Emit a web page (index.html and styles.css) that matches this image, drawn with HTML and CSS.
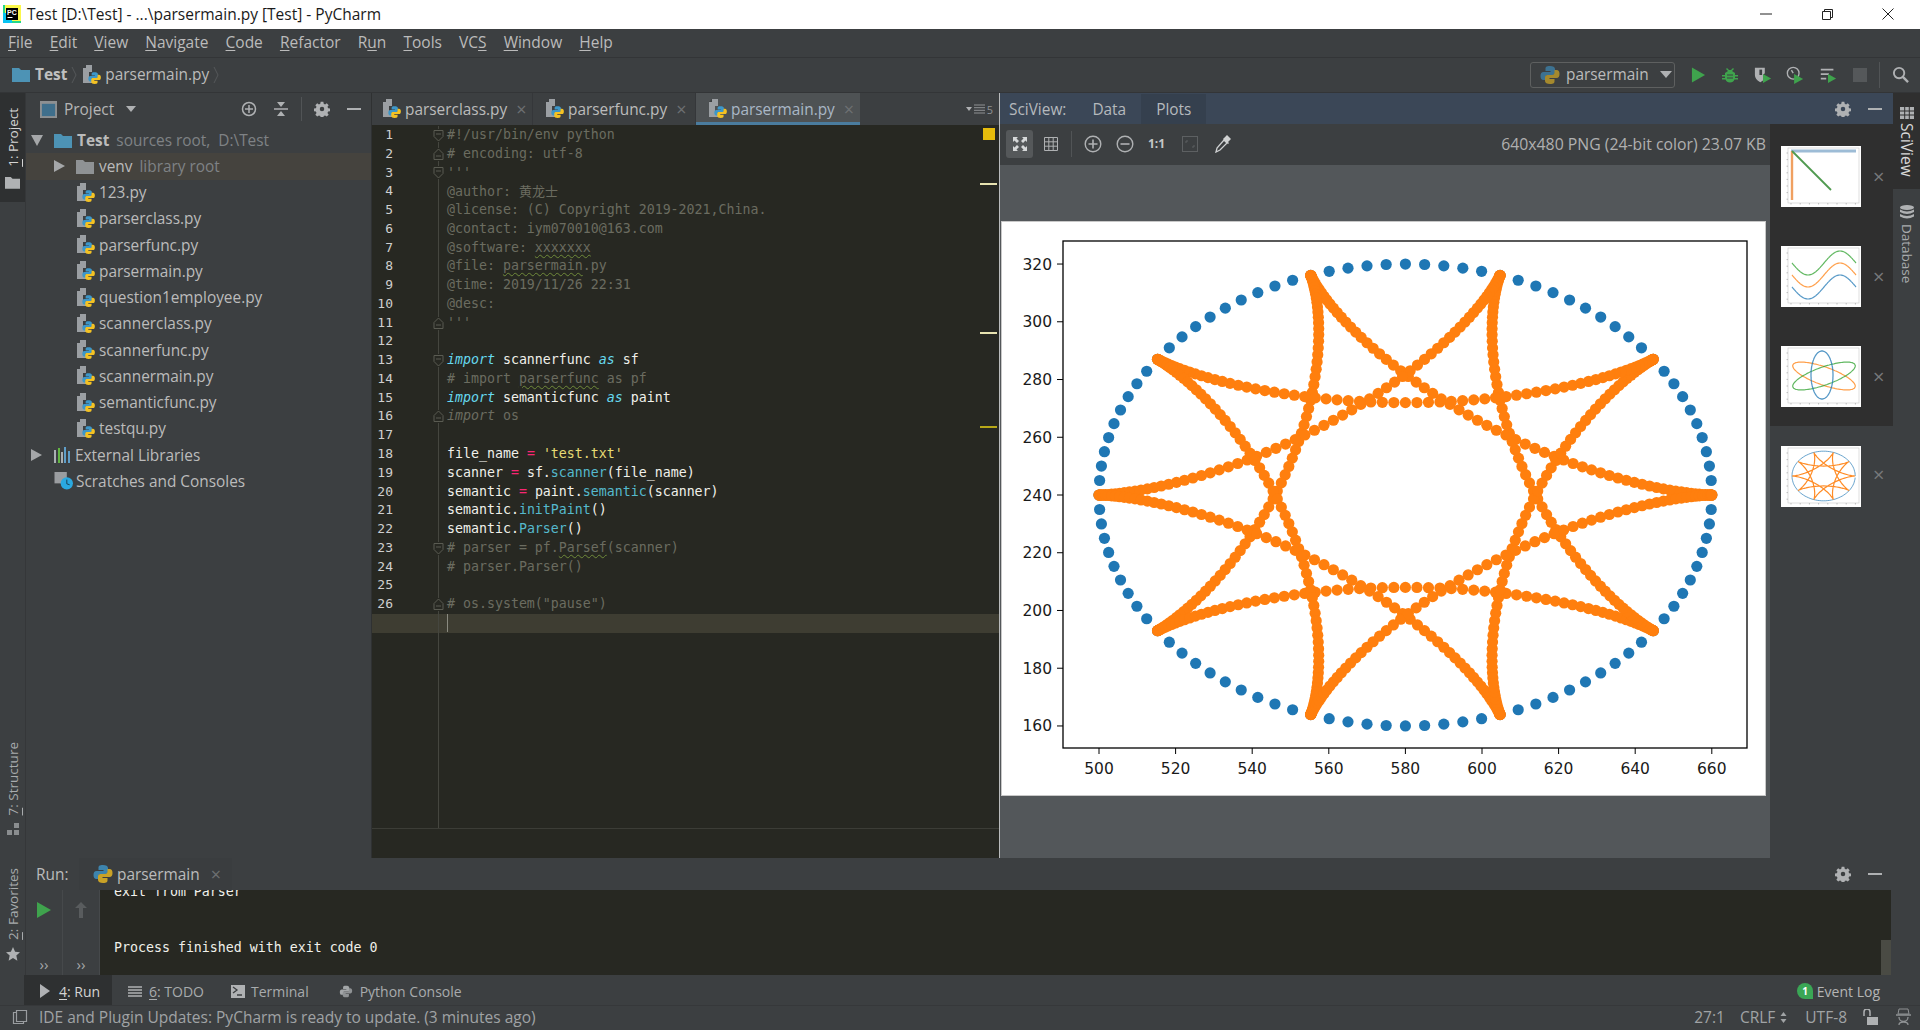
FILE: index.html
```html
<!DOCTYPE html>
<html lang="en">
<head>
<meta charset="utf-8">
<title>Test [D:\Test] - ...\parsermain.py [Test] - PyCharm</title>
<link rel="stylesheet" href="styles.css">
</head>
<body>
<svg class="sprite" aria-hidden="true">
  <symbol id="py" viewBox="0 0 18 20">
    <path d="M3 0h6v7h-3v7h3v4h-9v-15h3z" fill="#9b9fa3"/>
    <path d="M3 0v3h-3z" fill="#3c3f41"/>
    <g transform="translate(5 6.500) scale(.66)">
      <path d="M10 1c-4 0-4.500 1-4.500 3v2h5v1h-7c-2 0-3 1.500-3 4s1 4 3 4h2v-2.500c0-1.500 1-2.500 2.500-2.500h4.500c1.500 0 2.500-1 2.500-2.500v-3.500c0-2-2-3-5-3z" fill="#3d97c9"/>
      <path d="M10 19c4 0 4.500-1 4.500-3v-2h-5v-1h7c2 0 3-1.500 3-4s-1-4-3-4h-2v2.500c0 1.500-1 2.500-2.500 2.500h-4.500c-1.500 0-2.500 1-2.500 2.500v3.500c0 2 2 3 5 3z" fill="#f4c223"/>
    </g>
  </symbol>
  <symbol id="pylogo" viewBox="0 0 20 20">
    <path d="M10 1c-4 0-4.500 1-4.500 3v2h5v1h-7c-2 0-3 1.500-3 4s1 4 3 4h2v-2.500c0-1.500 1-2.500 2.500-2.500h4.500c1.500 0 2.500-1 2.500-2.500v-3.500c0-2-2-3-5-3z" fill="#3d84ad"/>
    <path d="M10 19c4 0 4.500-1 4.500-3v-2h-5v-1h7c2 0 3-1.500 3-4s-1-4-3-4h-2v2.500c0 1.500-1 2.500-2.500 2.500h-4.500c-1.500 0-2.500 1-2.500 2.500v3.500c0 2 2 3 5 3z" fill="#c9a227"/>
  </symbol>
  <symbol id="pymono" viewBox="0 0 20 20">
    <path d="M10 1c-4 0-4.500 1-4.500 3v2h5v1h-7c-2 0-3 1.500-3 4s1 4 3 4h2v-2.500c0-1.500 1-2.500 2.500-2.500h4.500c1.500 0 2.500-1 2.500-2.500v-3.500c0-2-2-3-5-3z" fill="#a3a6a8"/>
    <path d="M10 19c4 0 4.500-1 4.500-3v-2h-5v-1h7c2 0 3-1.500 3-4s-1-4-3-4h-2v2.500c0 1.500-1 2.500-2.500 2.500h-4.500c-1.500 0-2.500 1-2.500 2.500v3.500c0 2 2 3 5 3z" fill="#8f9294"/>
  </symbol>
  <symbol id="gear" viewBox="0 0 16 16">
    <path d="M6.500 0h3l.400 2.200 1.500.700 1.900-1.300 2.100 2.100-1.300 1.900.700 1.500 2.200.400v3l-2.200.400-.700 1.500 1.300 1.900-2.100 2.100-1.900-1.300-1.500.700-.400 2.200h-3l-.400-2.200-1.500-.700-1.900 1.300-2.100-2.100 1.300-1.900-.700-1.500-2.200-.400v-3l2.200-.400.700-1.500-1.300-1.900 2.100-2.100 1.900 1.300 1.500-.700z M8 5.500a2.500 2.500 0 1 0 0 5 2.500 2.500 0 0 0 0-5z" fill="#afb1b3" fill-rule="evenodd" transform="translate(.8 .8) scale(.9)"/>
  </symbol>
  <symbol id="folder" viewBox="0 0 18 15">
    <path d="M0 1h7l2 2h9v12h-18z" fill="currentColor"/>
  </symbol>
  <symbol id="chevron" viewBox="0 0 6 18">
    <path d="M1 1l4 8-4 8" fill="none" stroke="#55585a"/>
  </symbol>
</svg>

<header class="titlebar">
  <svg class="pc-logo" viewBox="0 0 18 18"><rect width="18" height="18" fill="#21d789"/><rect x="2" width="16" height="16" fill="#fcf84a"/><rect x="0" y="8" width="9" height="10" fill="#07c3f2"/><rect x="3" y="3" width="12" height="12" fill="#000"/><text x="4" y="9.500" class="pc-text">PC</text><rect x="4.500" y="12" width="5" height="1" fill="#fff"/></svg>
  <span class="title-text">Test [D:\Test] - ...\parsermain.py [Test] - PyCharm</span>
  <div class="win-controls">
    <svg class="win-btn" viewBox="0 0 14 14"><path d="M1 7h12" stroke="#222" fill="none"/></svg>
    <svg class="win-btn" viewBox="0 0 14 14"><path d="M2.500 4.500h8v8h-8zM4.500 4.500v-2h8v8h-2" stroke="#222" fill="none"/></svg>
    <svg class="win-btn" viewBox="0 0 14 14"><path d="M1.500 1.500l11 11M12.500 1.500l-11 11" stroke="#222" fill="none"/></svg>
  </div>
</header>

<nav class="menubar">
  <span class="menu-item"><u>F</u>ile</span>
  <span class="menu-item"><u>E</u>dit</span>
  <span class="menu-item"><u>V</u>iew</span>
  <span class="menu-item"><u>N</u>avigate</span>
  <span class="menu-item"><u>C</u>ode</span>
  <span class="menu-item"><u>R</u>efactor</span>
  <span class="menu-item">R<u>u</u>n</span>
  <span class="menu-item"><u>T</u>ools</span>
  <span class="menu-item">VC<u>S</u></span>
  <span class="menu-item"><u>W</u>indow</span>
  <span class="menu-item"><u>H</u>elp</span>
</nav>

<div class="navbar">
  <svg class="nav-folder"><use href="#folder"/></svg>
  <b class="crumb-root">Test</b>
  <svg class="crumb-sep"><use href="#chevron"/></svg>
  <svg class="pyicon nav-py"><use href="#py"/></svg>
  <span class="crumb">parsermain.py</span>
  <svg class="crumb-sep"><use href="#chevron"/></svg>
  <div class="nav-right">
    <div class="run-combo">
      <svg class="combo-py"><use href="#pylogo"/></svg>
      <span>parsermain</span>
      <i class="tri-down"></i>
    </div>
    <svg class="tool-ic ic-play" viewBox="0 0 16 18"><path d="M1 1l14 8-14 8z" fill="#3fa34d"/></svg>
    <svg class="tool-ic ic-bug" viewBox="0 0 18 18"><path d="M6 2l2 2h2l2-2 1 1-2 2 3 2v2h3v1.500h-3v1.500h3v1.500h-3.500q-1 3-4.500 3t-4.500-3h-3.500v-1.500h3v-1.500h-3v-1.500h3v-2l3-2-2-2z" fill="#3fa34d"/><path d="M6 9h6M6 12h6" stroke="#3c3f41"/></svg>
    <svg class="tool-ic ic-cov" viewBox="0 0 20 20"><path d="M1 2h11v6l-2 2v6l-3 2q-6-3-6-8z" fill="#afb1b3"/><path d="M6 4h3v6h-3z" fill="#3c3f41"/><path d="M10 9l9 5-9 5z" fill="#3fa34d"/></svg>
    <svg class="tool-ic ic-prof" viewBox="0 0 20 20"><circle cx="8" cy="8" r="6.500" fill="none" stroke="#afb1b3" stroke-width="1.500"/><path d="M8 8l-2-3.500" stroke="#afb1b3" stroke-width="1.500"/><path d="M9 9l10 5.500-10 5.500z" fill="#3fa34d"/></svg>
    <svg class="tool-ic ic-conc" viewBox="0 0 20 20"><path d="M2 3h14v2h-14zM2 8h9v2h-9zM2 13h6v2h-6z" fill="#afb1b3"/><path d="M10 9l9 5-9 5z" fill="#3fa34d"/></svg>
    <svg class="tool-ic ic-stop" viewBox="0 0 14 14"><rect width="14" height="14" fill="#55585a"/></svg>
    <i class="v-sep nav-sep"></i>
    <svg class="tool-ic ic-search" viewBox="0 0 18 18"><circle cx="7.500" cy="7.500" r="5.500" fill="none" stroke="#afb1b3" stroke-width="2"/><path d="M11.500 11.500l5.500 5.500" stroke="#afb1b3" stroke-width="2.500"/></svg>
  </div>
</div>

<div class="workspace">
  <aside class="stripe stripe-left">
    <div class="stripe-tab-active">
      <span class="vtext"><u>1</u>: Project</span>
      <svg class="stripe-folder"><use href="#folder"/></svg>
    </div>
    <div class="stripe-spacer"></div>
    <div class="stripe-tab tab-structure">
      <span class="vtext"><u>7</u>: Structure</span>
      <svg class="stripe-ic" viewBox="0 0 12 12"><path d="M0 7h5v5h-5zM7 7h5v5h-5zM7 0h5v5h-5z" fill="#8a8d8f"/></svg>
    </div>
    <div class="stripe-tab tab-fav">
      <span class="vtext"><u>2</u>: Favorites</span>
      <svg class="stripe-star" viewBox="0 0 16 16"><path d="M8 0l2.400 5.400 5.600.600-4.200 3.800 1.200 5.800-5-3-5 3 1.200-5.800-4.200-3.800 5.600-.600z" fill="#afb1b3"/></svg>
    </div>
  </aside>

  <div class="center">
    <div class="upper">
      <section class="project">
        <div class="panel-head">
          <svg class="proj-ic" viewBox="0 0 18 18"><rect width="18" height="18" fill="#8d9092"/><rect x="2" y="3" width="14" height="13" fill="#3f6f8c"/></svg>
          <span class="proj-label">Project</span>
          <i class="tri-down small"></i>
          <div class="head-right">
            <svg class="hd-ic" viewBox="0 0 16 16"><circle cx="8" cy="8" r="6.500" fill="none" stroke="#afb1b3" stroke-width="1.500"/><path d="M8 4v8M4 8h8" stroke="#afb1b3" stroke-width="1.500"/></svg>
            <svg class="hd-ic" viewBox="0 0 16 16"><path d="M1 8h14" stroke="#afb1b3" stroke-width="1.500"/><path d="M8 6l-4-5h8zM8 10l-4 5h8z" fill="#afb1b3"/></svg>
            <i class="v-sep"></i>
            <svg class="hd-ic"><use href="#gear"/></svg>
            <svg class="hd-ic" viewBox="0 0 16 16"><path d="M1 8h14" stroke="#afb1b3" stroke-width="2"/></svg>
          </div>
        </div>
        <div class="tree">
          <div class="row d0"><i class="tri open"></i><svg class="row-folder blue"><use href="#folder"/></svg><b class="root-name">Test</b><span class="dim">sources root,&nbsp; D:\Test</span></div>
          <div class="row d1 selected"><i class="tri closed"></i><svg class="row-folder grey"><use href="#folder"/></svg><span>venv</span><span class="dim">library root</span></div>
          <div class="row d2"><svg class="pyicon"><use href="#py"/></svg><span>123.py</span></div>
          <div class="row d2"><svg class="pyicon"><use href="#py"/></svg><span>parserclass.py</span></div>
          <div class="row d2"><svg class="pyicon"><use href="#py"/></svg><span>parserfunc.py</span></div>
          <div class="row d2"><svg class="pyicon"><use href="#py"/></svg><span>parsermain.py</span></div>
          <div class="row d2"><svg class="pyicon"><use href="#py"/></svg><span>question1employee.py</span></div>
          <div class="row d2"><svg class="pyicon"><use href="#py"/></svg><span>scannerclass.py</span></div>
          <div class="row d2"><svg class="pyicon"><use href="#py"/></svg><span>scannerfunc.py</span></div>
          <div class="row d2"><svg class="pyicon"><use href="#py"/></svg><span>scannermain.py</span></div>
          <div class="row d2"><svg class="pyicon"><use href="#py"/></svg><span>semanticfunc.py</span></div>
          <div class="row d2"><svg class="pyicon"><use href="#py"/></svg><span>testqu.py</span></div>
          <div class="row d0"><i class="tri closed"></i><svg class="lib-ic" viewBox="0 0 19 18"><path d="M1 4h2v13h-2zM8 6h2v11h-2z" fill="#aab0b4"/><path d="M5 2h2v15h-2z" fill="#62b543"/><path d="M11 1h2v16h-2zM15 5h2v12h-2z" fill="#5f9ec9"/></svg><span>External Libraries</span></div>
          <div class="row noarrow"><svg class="lib-ic" viewBox="0 0 19 19"><path d="M0 0h13v12h-13z" fill="#9a9da0"/><circle cx="13" cy="12" r="6.500" fill="#2aa9e0"/><path d="M13 8v4.500l3 1" stroke="#1b3b4d" fill="none"/></svg><span>Scratches and Consoles</span></div>
        </div>
      </section>

      <section class="editor">
        <div class="tabs">
          <div class="tab tab-first"><svg class="pyicon"><use href="#py"/></svg><span>parserclass.py</span><em class="tab-x">×</em></div>
          <div class="tab tab-second"><svg class="pyicon"><use href="#py"/></svg><span>parserfunc.py</span><em class="tab-x">×</em></div>
          <div class="tab tab-active"><svg class="pyicon"><use href="#py"/></svg><span>parsermain.py</span><em class="tab-x">×</em></div>
          <div class="tab-more"><i class="tri-down tiny"></i><svg class="more-ic" viewBox="0 0 11 10"><path d="M0 1h11M0 3.700h11M0 6.300h11M0 9h11" stroke="#8f9294"/></svg><span>5</span></div>
        </div>
        <div class="code-wrap">
          <div class="gutter" id="gutter"></div>
          <div class="fold-col" id="folds"></div>
          <pre class="code"><div class="ln c">#!/usr/bin/env python</div><div class="ln c"># encoding: utf-8</div><div class="ln c">'''</div><div class="ln c">@author: <span class="cjk">黄龙士</span></div><div class="ln c">@license: (C) Copyright 2019-2021,China.</div><div class="ln c">@contact: iym070010@163.com</div><div class="ln c">@software: <span class="sq">xxxxxxx</span></div><div class="ln c">@file: <span class="sq">parsermain</span>.py</div><div class="ln c">@time: 2019/11/26 22:31</div><div class="ln c">@desc:</div><div class="ln c">'''</div><div class="ln"></div><div class="ln"><span class="kw">import</span> scannerfunc <span class="kw">as</span> sf</div><div class="ln c"># import <span class="sq">parserfunc</span> as pf</div><div class="ln"><span class="kw">import</span> semanticfunc <span class="kw">as</span> paint</div><div class="ln c"><span class="it">import</span> os</div><div class="ln"></div><div class="ln">file_name <span class="op">=</span> <span class="str">'test.txt'</span></div><div class="ln">scanner <span class="op">=</span> sf.<span class="fn">scanner</span>(file_name)</div><div class="ln">semantic <span class="op">=</span> paint.<span class="fn">semantic</span>(scanner)</div><div class="ln">semantic.<span class="fn">initPaint</span>()</div><div class="ln">semantic.<span class="fn">Parser</span>()</div><div class="ln c"># parser = pf.<span class="sq">Parsef</span>(scanner)</div><div class="ln c"># parser.Parser()</div><div class="ln"></div><div class="ln c"># os.system("pause")</div><div class="ln current"><b class="caret"></b></div></pre>
          <div class="stripe-marks">
            <i class="mark-box"></i>
            <i class="mark m1"></i>
            <i class="mark m2"></i>
            <i class="mark m3"></i>
          </div>
          <div class="h-rule"></div>
        </div>
      </section>

      <section class="sciview">
        <div class="sci-head">
          <span class="sci-title">SciView:</span>
          <span class="sci-tab">Data</span>
          <span class="sci-tab active">Plots</span>
          <div class="head-right">
            <svg class="hd-ic"><use href="#gear"/></svg>
            <svg class="hd-ic" viewBox="0 0 16 16"><path d="M1 8h14" stroke="#afb1b3" stroke-width="2"/></svg>
          </div>
        </div>
        <div class="sci-body">
          <div class="sci-main">
            <div class="sci-tools">
              <span class="fit-btn"><svg viewBox="0 0 16 16"><path d="M1 1h5l-1.500 1.500 2.500 2.500-2 2-2.500-2.500-1.500 1.500zM15 1v5l-1.500-1.500-2.500 2.500-2-2 2.500-2.500-1.500-1.500zM1 15v-5l1.500 1.500 2.500-2.500 2 2-2.500 2.500 1.500 1.500zM15 15h-5l1.500-1.500-2.500-2.500 2-2 2.500 2.500 1.500-1.500z" fill="#d6d8d9"/></svg></span>
              <svg class="sci-ic grid-ic" viewBox="0 0 16 16"><path d="M1.500 1.500h13v13h-13zM1.500 5.800h13M1.500 10.200h13M5.800 1.500v13M10.200 1.500v13" stroke="#afb1b3" fill="none"/></svg>
              <i class="v-sep tool-sep"></i>
              <svg class="sci-ic zoom-ic" viewBox="0 0 18 18"><circle cx="9" cy="9" r="7.800" fill="none" stroke="#afb1b3" stroke-width="1.400"/><path d="M4.500 9h9M9 4.500v9" stroke="#afb1b3" stroke-width="1.600"/></svg>
              <svg class="sci-ic zoom-ic" viewBox="0 0 18 18"><circle cx="9" cy="9" r="7.800" fill="none" stroke="#afb1b3" stroke-width="1.400"/><path d="M4.500 9h9" stroke="#afb1b3" stroke-width="1.600"/></svg>
              <span class="one-one">1:1</span>
              <svg class="sci-ic box-ic" viewBox="0 0 16 16"><rect x=".5" y=".5" width="15" height="15" fill="none" stroke="#5d6062"/><path d="M4 5h2M4 5v2M12 11h-2M12 11v-2" stroke="#5d6062"/></svg>
              <svg class="sci-ic drop-ic" viewBox="0 0 16 18"><path d="M1 17l1-4 7-8 3 3-7 7z" fill="none" stroke="#cfd1d2" stroke-width="1.300"/><path d="M9 3l3-3 4 4-3 3 1 1-1 1-5-5 1-1z" fill="#cfd1d2"/></svg>
              <span class="img-info">640x480 PNG (24-bit color) 23.07 KB</span>
            </div>
            <div class="canvas">
              <svg class="plot" id="plot" viewBox="0 0 763 573">
                <rect x="61" y="19" width="684" height="507" fill="#fff" stroke="#000" stroke-width="1.300"/>
                <g id="plot-dots"></g>
                <g id="plot-axes" class="axis"></g>
              </svg>
            </div>
          </div>
          <div class="thumbs">
            <div class="thumb"><svg class="thumb-img" id="t1" viewBox="0 0 80 61"></svg><em>×</em></div>
            <div class="thumb"><svg class="thumb-img" id="t2" viewBox="0 0 80 61"></svg><em>×</em></div>
            <div class="thumb"><svg class="thumb-img" id="t3" viewBox="0 0 80 61"></svg><em>×</em></div>
            <div class="thumb selected"><svg class="thumb-img" id="t4" viewBox="0 0 80 61"></svg><em>×</em></div>
          </div>
        </div>
      </section>
    </div>

    <section class="run">
      <div class="run-head">
        <span class="run-label">Run:</span>
        <div class="run-tab"><svg class="run-py"><use href="#pylogo"/></svg><span>parsermain</span><em class="tab-x">×</em></div>
        <div class="head-right">
          <svg class="hd-ic"><use href="#gear"/></svg>
          <svg class="hd-ic" viewBox="0 0 16 16"><path d="M1 8h14" stroke="#afb1b3" stroke-width="2"/></svg>
        </div>
      </div>
      <div class="run-body">
        <div class="run-col">
          <svg class="run-play" viewBox="0 0 14 16"><path d="M0 0l14 8-14 8z" fill="#3fa34d"/></svg>
          <span class="chev">››</span>
        </div>
        <div class="run-col">
          <svg class="run-up" viewBox="0 0 14 16"><path d="M7 0l6 6h-4v10h-4v-10h-4z" fill="#595c5e"/></svg>
          <span class="chev">››</span>
        </div>
        <div class="console">
          <div class="con-line clip">exit from Parser</div>
          <div class="con-line"></div>
          <div class="con-line"></div>
          <div class="con-line">Process finished with exit code 0</div>
        </div>
        <i class="console-thumb"></i>
      </div>
    </section>
  </div>

  <aside class="stripe stripe-right">
    <div class="stripe-tab-active right">
      <svg class="sci-stripe" viewBox="0 0 14 12"><path d="M0 0h14v12h-14z" fill="#afb1b3"/><path d="M0 4h14M0 8h14M4.700 0v12M9.300 0v12" stroke="#2f2f2f"/></svg>
      <span class="vtext-r light">SciView</span>
    </div>
    <div class="stripe-tab right-db">
      <svg class="sci-stripe db" viewBox="0 0 14 14"><ellipse cx="7" cy="2.500" rx="7" ry="2.500" fill="#afb1b3"/><path d="M0 4.500q7 4 14 0v2.500q-7 4-14 0zM0 9q7 4 14 0v2.500q-7 4-14 0z" fill="#afb1b3"/></svg>
      <span class="vtext-r">Database</span>
    </div>
  </aside>
</div>

<div class="bottom-tools">
  <div class="bt-item active"><svg class="bt-play" viewBox="0 0 10 14"><path d="M0 0l10 7-10 7z" fill="#afb1b3"/></svg><span><u>4</u>: Run</span></div>
  <div class="bt-item"><svg class="bt-ic" viewBox="0 0 14 12"><path d="M0 1.500h14M0 4.500h14M0 7.500h14M0 10.500h14" stroke="#afb1b3" stroke-width="1.500"/></svg><span><u>6</u>: TODO</span></div>
  <div class="bt-item"><svg class="bt-ic" viewBox="0 0 14 13"><rect width="14" height="13" fill="#afb1b3"/><path d="M2 2l4 3-4 3M6 10h5" stroke="#3c3f41" stroke-width="1.300" fill="none"/></svg><span>Terminal</span></div>
  <div class="bt-item"><svg class="bt-ic"><use href="#pymono"/></svg><span>Python Console</span></div>
  <div class="bt-right"><svg class="event-ic" viewBox="0 0 16 16"><path d="M8 0a8 8 0 0 1 8 8v8h-8a8 8 0 0 1 0-16z" fill="#3aa655"/><text x="8" y="11.500" class="event-num">1</text></svg><span>Event Log</span></div>
</div>

<footer class="status">
  <svg class="st-ic" viewBox="0 0 16 16"><path d="M4.500 1.500h10v11h-10zM4.500 3.500h-3v11h10v-2" fill="none" stroke="#9a9da0" stroke-width="1.200"/></svg>
  <span class="st-msg">IDE and Plugin Updates: PyCharm is ready to update. (3 minutes ago)</span>
  <div class="st-right">
    <span>27:1</span>
    <span class="st-crlf">CRLF</span>
    <svg class="updown" viewBox="0 0 7 11"><path d="M3.500 0l3 4h-6zM3.500 11l3-4h-6z" fill="#a0a3a5"/></svg>
    <span class="st-utf">UTF-8</span>
    <svg class="st-lock" viewBox="0 0 15 16"><path d="M1 7v-4a3 3 0 0 1 6 0v4" fill="none" stroke="#afb1b3" stroke-width="1.500"/><rect x="4" y="8" width="11" height="8" fill="#afb1b3"/></svg>
    <svg class="st-hector" viewBox="0 0 15 18"><path d="M3 1h9l1 5h-11z" fill="none" stroke="#8f9294"/><path d="M0 7h15M3 9a4.500 4.500 0 0 0 9 0M3 17q0-3 4.500-3t4.500 3" fill="none" stroke="#8f9294" stroke-width="1.300"/></svg>
  </div>
</footer>
<script src="script.js"></script>
</body>
</html>
```
FILE: styles.css
```css
* { box-sizing: border-box; }
html, body { margin: 0; padding: 0; }
body {
  width: 1920px; height: 1030px; overflow: hidden;
  display: flex; flex-direction: column;
  background: #3c3f41; color: #bbbbbb;
  font: 15.400px "Open Sans", "Noto Sans", sans-serif;
}
svg { display: block; flex: none; }
.sprite { width: 0; height: 0; position: absolute; }
i, em { font-style: normal; }
u { text-underline-offset: 2px; }
.head-right { margin-left: auto; display: flex; align-items: center; }
.v-sep { display: block; width: 1px; background: #515456; flex: none; }

/* title */
.titlebar { height: 29px; background: #fff; color: #1a1a1a; display: flex; align-items: center; flex: none; padding-bottom: 2px; }
.pc-logo { width: 18px; height: 18px; margin-left: 3px; }
.pc-text { font: bold 7px "Liberation Sans", sans-serif; fill: #fff; }
.title-text { margin-left: 6px; font-size: 15.500px; white-space: pre; }
.win-controls { margin-left: auto; display: flex; gap: 47px; padding-right: 25px; }
.win-btn { width: 14px; height: 14px; }

/* menu */
.menubar { height: 29px; flex: none; display: flex; align-items: center; padding: 0 0 2px 8px; gap: 17.100px; border-bottom: 1px solid #333537; font-size: 15.500px; }
.menu-item { color: #bbb; white-space: nowrap; }

/* navbar */
.navbar { height: 35px; flex: none; display: flex; align-items: center; padding: 0 0 1px 12px; border-bottom: 1px solid #333537; }
.nav-folder { width: 18px; height: 15px; color: #4d93b5; }
.crumb-root { margin-left: 5px; color: #c0c0c0; font-weight: 700; }
.crumb-sep { width: 6px; height: 18px; margin: 0 6px 0 4px; }
.crumb { margin-left: 4px; color: #bbb; }
.nav-right { margin-left: auto; display: flex; align-items: center; }
.run-combo { width: 145px; height: 26px; margin-right: 16px; border: 1px solid #5e6060; border-radius: 3px; display: flex; align-items: center; padding-left: 9px; gap: 6px; }
.combo-py { width: 20px; height: 20px; opacity: .75; }
.tri-down { display: block; width: 0; height: 0; border-left: 6px solid transparent; border-right: 6px solid transparent; border-top: 7px solid #afb1b3; margin-left: 5px; }
.tri-down.small { border-left-width: 5px; border-right-width: 5px; border-top-width: 6px; margin-left: 12px; }
.tri-down.tiny { border-left-width: 3px; border-right-width: 3px; border-top-width: 4px; margin: 0 2px 0 0; }
.tool-ic { width: 18px; height: 18px; margin-right: 14px; }
.ic-play { width: 15px; margin-right: 15px; }
.ic-bug { margin-right: 15px; }
.ic-prof { margin-right: 15px; }
.ic-stop { width: 14px; height: 14px; margin-right: 12px; margin-left: 2px; }
.nav-sep { height: 26px; margin-right: 12px; }
.ic-search { margin-right: 11px; width: 17px; height: 17px; }

/* workspace */
.workspace { flex: 1; min-height: 0; display: flex; }
.stripe { width: 26px; flex: none; display: flex; flex-direction: column; align-items: center; background: #3c3f41; font-size: 13.500px; color: #a8abad; }
.stripe-left { border-right: 1px solid #353739; }
.stripe-right { width: 27px; }
.vtext { writing-mode: vertical-rl; transform: rotate(180deg); white-space: nowrap; }
.vtext-r { writing-mode: vertical-rl; white-space: nowrap; }
.stripe-tab-active { width: 100%; height: 109px; flex: none; background: #2e3031; color: #d4d4d4; display: flex; flex-direction: column; align-items: center; padding-top: 15px; }
.stripe-tab-active.right { height: 96px; padding-top: 14px; background: #2f2f2f; gap: 4px; }
.light { color: #d8d8d8; font-size: 15.500px; }
.stripe-folder { width: 15px; height: 13px; color: #b0b2b4; margin-top: 9px; }
.stripe-spacer { flex: 1; min-height: 0; }
.stripe-tab { display: flex; flex-direction: column; align-items: center; flex: none; }
.tab-structure { gap: 8px; margin-bottom: 33px; }
.tab-fav { padding-bottom: 14px; gap: 7px; }
.stripe-ic { width: 12px; height: 12px; }
.stripe-star { width: 14px; height: 14px; }
.right-db { margin-top: 16px; gap: 5px; }
.sci-stripe { width: 14px; height: 12px; }
.sci-stripe.db { height: 14px; }

.center { flex: 1; min-width: 0; display: flex; flex-direction: column; }
.upper { height: 765px; flex: none; display: flex; }

/* project */
.project { width: 346px; flex: none; display: flex; flex-direction: column; background: #3c3f41; border-right: 1px solid #2f3132; }
.panel-head { height: 32px; flex: none; display: flex; align-items: center; padding-left: 14px; }
.proj-ic { width: 17px; height: 17px; }
.proj-label { margin-left: 7px; color: #b5b5b5; }
.hd-ic { width: 16px; height: 16px; }
.project .head-right { gap: 16px; padding-right: 9px; }
.project .v-sep { height: 24px; margin: 0 -4px; }
.tree { padding-top: 2px; }
.row { height: 26.260px; display: flex; align-items: center; white-space: nowrap; }
.row.d0 { padding-left: 5px; }
.row.d1 { padding-left: 28px; }
.row.d2 { padding-left: 51px; }
.row.noarrow { padding-left: 28px; }
.row.selected { background: #45433e; }
.tri { display: block; width: 0; height: 0; flex: none; }
.tri.open { border-left: 6px solid transparent; border-right: 6px solid transparent; border-top: 11px solid #a5a7a9; margin-right: 11px; }
.tri.closed { border-top: 6px solid transparent; border-bottom: 6px solid transparent; border-left: 11px solid #a5a7a9; margin-right: 11px; }
.row-folder { width: 18px; height: 15px; }
.row-folder.blue { color: #4d93b5; }
.row-folder.grey { color: #8f9294; }
.root-name { margin-left: 5px; color: #bbb; font-weight: 700; }
.row.d1 > span:first-of-type { margin-left: 5px; }
.dim { margin-left: 7px; color: #7f8285; }
.pyicon { width: 18px; height: 20px; }
.row.d2 span { margin-left: 4px; }
.lib-ic { width: 19px; height: 18px; margin-right: 3px; }

/* editor */
.editor { width: 628px; flex: none; display: flex; flex-direction: column; background: #272822; border-right: 1px solid #b9bbbc; }
.tabs { height: 32px; flex: none; display: flex; align-items: stretch; background: #3c3f41; }
.tab { display: flex; align-items: center; padding-left: 11px; color: #bbb; border-right: 1px solid #35373a; }
.tab span { margin-left: 4px; }
.tab-first { width: 161px; }
.tab-second { width: 163px; padding-left: 13px; }
.tab-active { width: 164px; padding: 3px 0 0 13px; background: #4e5254; border-bottom: 3px solid #4a7c9e; border-right: 0; color: #a9b7c6; }
.tab-x { margin-left: 9px; color: #6d7072; font-size: 18px; line-height: 1; }
.tab-more { margin-left: auto; display: flex; align-items: center; padding-right: 6px; color: #8f9294; font-size: 11px; }
.more-ic { width: 11px; height: 10px; margin-right: 2px; }
.code-wrap { flex: 1; position: relative; display: flex; min-height: 0; padding-top: 1px; }
.gutter { width: 61px; flex: none; font: 13px/18.770px "DejaVu Sans Mono", monospace; color: #cfcfcf; }
.gutter div { text-align: right; padding-right: 40px; height: 18.770px; }
.fold-col { width: 14px; flex: none; position: relative; }
.fold-col::before { content: ""; position: absolute; top: 0; bottom: 30px; left: 5px; width: 1px; background: #45463f; }
.fold-cell { height: 18.770px; position: relative; display: flex; align-items: center; }
.fold-cell svg { width: 11px; height: 13px; }
.code { margin: 0; flex: 1; font: 13.280px/18.770px "DejaVu Sans Mono", "Noto Sans CJK SC", monospace; color: #f0f0ea; min-width: 0; }
.ln { height: 18.770px; white-space: pre; }
.ln.current { background: #3e3d32; margin-left: -75px; padding-left: 75px; }
.caret { display: block; width: 1px; height: 18px; background: #8a8a80; }
.c { color: #6b6c60; }
.it { font-style: italic; }
.cjk { font-family: "Noto Sans CJK SC", sans-serif; font-size: 13px; }
.kw { color: #66d9ef; font-style: italic; }
.op { color: #f92672; }
.str { color: #e6db74; }
.fn { color: #55b9cd; }
.sq { text-decoration: underline wavy #6f8a3a 1px; text-underline-offset: 2px; }
.stripe-marks { position: absolute; top: 0; bottom: 0; right: 0; width: 20px; }
.mark-box { position: absolute; right: 4px; top: 3px; width: 12px; height: 12px; background: #e6bc0c; }
.mark { position: absolute; right: 2px; width: 17px; height: 2px; background: #e8e3b0; }
.m1 { top: 58px; }
.m2 { top: 207px; }
.m3 { top: 301px; background: #b8a818; }
.h-rule { position: absolute; left: 0; right: 0; top: 703px; height: 1px; background: #3c3d37; }

/* sciview */
.sciview { flex: 1; min-width: 0; display: flex; flex-direction: column; }
.sci-head { height: 31px; flex: none; background: #3b4757; display: flex; align-items: stretch; padding: 1px 0 0 9px; color: #b5b9bd; }
.sci-title, .sci-tab { display: flex; align-items: center; }
.sci-tab { padding: 0 15px; }
.sci-title + .sci-tab { margin-left: 11px; }
.sci-tab.active { background: #35404e; }
.sci-head .head-right { gap: 16px; padding-right: 10px; }
.sci-body { flex: 1; min-height: 0; display: flex; }
.sci-main { width: 770px; flex: none; display: flex; flex-direction: column; background: #53575a; }
.sci-tools { height: 41px; flex: none; background: #3c3f41; display: flex; align-items: center; padding: 0 0 2px 6px; }
.fit-btn { width: 27px; height: 28px; background: #55585a; border-radius: 3px; display: flex; align-items: center; justify-content: center; }
.fit-btn svg { width: 16px; height: 16px; }
.sci-ic { width: 16px; height: 16px; }
.grid-ic { margin-left: 10px; }
.tool-sep { height: 26px; margin: 0 12px 0 12px; }
.zoom-ic { width: 18px; height: 18px; margin-right: 14px; }
.one-one { font-size: 12px; font-weight: 700; color: #c5c7c8; width: 18px; margin-right: 16px; }
.box-ic { margin-right: 17px; }
.drop-ic { height: 18px; }
.img-info { margin-left: auto; padding-right: 4px; font-size: 15.800px; color: #b0b0b0; white-space: nowrap; }
.canvas { flex: 1; padding: 57px 0 0 2px; }
.plot { width: 763px; height: 573px; background: #fff; outline: 1px solid #c8c8c8; }
.axis { font: 15.500px "DejaVu Sans", sans-serif; fill: #1a1a1a; }
.thumbs { flex: 1; display: flex; flex-direction: column; background: #2f2f2f; padding-top: 2px; }
.thumb { height: 100px; flex: none; display: flex; align-items: center; padding-left: 11px; color: #77797b; }
.thumb em { font-size: 20px; margin-left: 12px; }
.thumb.selected { background: #3c3f41; flex: 1; align-items: flex-start; padding-top: 20px; }
.thumb.selected em { margin-top: 15px; }
.thumb-img { width: 80px; height: 61px; background: #fff; }

/* run */
.run { flex: 1; min-height: 0; display: flex; flex-direction: column; }
.run-head { height: 32px; flex: none; display: flex; align-items: stretch; padding-left: 10px; }
.run-label { display: flex; align-items: center; width: 43px; }
.run-tab { width: 153px; background: #3a3d3f; display: flex; align-items: center; padding-left: 14px; white-space: nowrap; }
.run-py { width: 20px; height: 20px; margin-right: 4px; }
.run-tab .tab-x { margin-left: 11px; }
.run-head .head-right { gap: 16px; padding-right: 10px; }
.run-body { flex: 1; min-height: 0; display: flex; position: relative; }
.run-col { width: 37px; flex: none; display: flex; flex-direction: column; align-items: center; padding: 12px 0 2px; border-right: 1px solid #46494b; }
.run-play { width: 14px; height: 16px; }
.run-up { width: 14px; height: 16px; }
.chev { margin-top: auto; font-size: 15px; line-height: 18px; color: #a5a8aa; }
.console { flex: 1; min-width: 0; margin-right: 2px; background: #272822; color: #f0f0ea; font: 13.280px/18.770px "DejaVu Sans Mono", monospace; padding: 0 0 0 14px; overflow: hidden; }
.con-line { height: 18.770px; white-space: pre; }
.clip { margin-top: -7px; }
.console-thumb { position: absolute; right: 2px; bottom: 0; width: 10px; height: 35px; background: #4a4b44; }

/* bottom */
.bottom-tools { height: 31px; flex: none; display: flex; align-items: center; padding-left: 24px; font-size: 14px; color: #a8abad; background: #3c3f41; border-bottom: 1px solid #36383a; white-space: nowrap; }
.bt-item { height: 30px; display: flex; align-items: center; gap: 7px; padding-top: 2px; }
.bt-item.active { background: #2e3031; color: #d4d4d4; width: 88px; padding-left: 16px; gap: 9px; }
.bt-play { width: 10px; height: 14px; }
.bt-ic { width: 14px; height: 13px; }
.bt-item:nth-child(2) { margin-left: 16px; }
.bt-item:nth-child(3) { margin-left: 27px; gap: 6px; }
.bt-item:nth-child(4) { margin-left: 30px; }
.bt-right { margin-left: auto; display: flex; align-items: center; gap: 4px; padding: 2px 40px 0 0; color: #b5b5b5; }
.event-ic { width: 16px; height: 16px; }
.event-num { font: bold 10px "Open Sans", sans-serif; fill: #fff; text-anchor: middle; }

/* status */
.status { height: 24px; flex: none; display: flex; align-items: center; padding: 0 0 2px 12px; color: #a0a3a5; font-size: 15.500px; white-space: nowrap; }
.st-ic { width: 16px; height: 16px; }
.st-msg { margin-left: 11px; }
.st-right { margin-left: auto; display: flex; align-items: center; }
.st-crlf { margin-left: 15px; }
.updown { width: 7px; height: 11px; margin-left: 5px; }
.st-utf { margin-left: 18px; }
.st-lock { width: 15px; height: 16px; margin-left: 16px; }
.st-hector { width: 15px; height: 18px; margin: 0 9px 0 18px; }
```
FILE: script.js
```js
(function () {
  var NS = "http://www.w3.org/2000/svg";
  var BLUE = "#1f77b4", ORANGE = "#ff7f0e", GREEN = "#2ca02c";

  function el(parent, name, attrs, text) {
    var node = document.createElementNS(NS, name);
    for (var key in attrs) node.setAttribute(key, attrs[key]);
    if (text !== undefined) node.textContent = text;
    parent.appendChild(node);
    return node;
  }

  /* line numbers and fold markers */
  var gutter = document.getElementById("gutter");
  var folds = document.getElementById("folds");
  var foldStart = { 1: 1, 3: 1, 13: 1, 23: 1 };
  var foldEnd = { 2: 1, 11: 1, 16: 1, 26: 1 };
  for (var n = 1; n <= 27; n++) {
    var d = document.createElement("div");
    d.textContent = n;
    gutter.appendChild(d);
    var cell = document.createElement("div");
    cell.className = "fold-cell";
    folds.appendChild(cell);
    if (foldStart[n] || foldEnd[n]) {
      var s = el(cell, "svg", { viewBox: "0 0 11 13" });
      el(s, "rect", { x: 0, y: 0, width: 11, height: 13, fill: "#272822" });
      el(s, "path", {
        d: foldStart[n] ? "M1 1.500h9v6l-4.500 4.500-4.500-4.500z M3 5h5" : "M1 11.500h9v-6l-4.500-4.500-4.500 4.500z M3 8h5",
        fill: "none", stroke: "#5a5b52"
      });
    }
  }

  /* data: the circle and the ten-cusp hypocycloid star */
  function circlePts() {
    var out = [];
    for (var i = 0; i < 100; i++) {
      var t = i * Math.PI * 2 / 100;
      out.push([580 + 80 * Math.cos(t), 240 + 80 * Math.sin(t)]);
    }
    return out;
  }
  function starPts(count) {
    var out = [];
    for (var i = 0; i <= count; i++) {
      var t = i * Math.PI * 2 / count;
      out.push([
        580 + 56 * Math.cos(3 * t) + 24 * Math.cos(7 * t),
        240 + 56 * Math.sin(3 * t) - 24 * Math.sin(7 * t)
      ]);
    }
    return out;
  }

  /* main plot */
  var X = function (u) { return 97 + (u - 500) * 3.83; };
  var Y = function (v) { return 273 - (v - 240) * 2.887; };
  var dots = document.getElementById("plot-dots");
  circlePts().forEach(function (p) { el(dots, "circle", { cx: X(p[0]), cy: Y(p[1]), r: 5.6, fill: BLUE }); });
  starPts(700).forEach(function (p) { el(dots, "circle", { cx: X(p[0]), cy: Y(p[1]), r: 5.6, fill: ORANGE }); });

  var axes = document.getElementById("plot-axes");
  for (var xt = 500; xt <= 660; xt += 20) {
    el(axes, "path", { d: "M" + X(xt) + " 526v6", stroke: "#000", "stroke-width": 1 });
    el(axes, "text", { x: X(xt), y: 552, "text-anchor": "middle" }, String(xt));
  }
  for (var yt = 160; yt <= 320; yt += 20) {
    el(axes, "path", { d: "M61 " + Y(yt) + "h-6", stroke: "#000", "stroke-width": 1 });
    el(axes, "text", { x: 50, y: Y(yt) + 5.5, "text-anchor": "end" }, String(yt));
  }

  /* thumbnails */
  function frame(svg) {
    el(svg, "rect", { x: 7, y: 2, width: 71, height: 55, fill: "#fff", stroke: "#c8c8c8", "stroke-width": 0.6 });
    for (var i = 0; i < 8; i++) {
      el(svg, "path", { d: "M" + (10 + i * 9.2) + " 57v1.500", stroke: "#999", "stroke-width": 0.6 });
      el(svg, "path", { d: "M7 " + (7 + i * 6.6) + "h-1.500", stroke: "#999", "stroke-width": 0.6 });
    }
  }
  function curve(svg, pts, color, width, opacity) {
    el(svg, "polyline", {
      points: pts.map(function (p) { return p[0].toFixed(1) + "," + p[1].toFixed(1); }).join(" "),
      fill: "none", stroke: color, "stroke-width": width, opacity: opacity || 0.75
    });
  }
  function param(f, a, b) {
    var out = [];
    for (var i = 0; i <= 120; i++) out.push(f(a + (b - a) * i / 120));
    return out;
  }

  var t1 = document.getElementById("t1");
  frame(t1);
  curve(t1, [[10, 5], [75, 5]], "#9dbcd6", 3, 1);
  curve(t1, [[11, 5], [11, 54]], "#f0a060", 2.4, 1);
  curve(t1, [[11, 5], [50, 44]], "#4f9a4f", 1.8, 1);

  var t2 = document.getElementById("t2");
  frame(t2);
  [[17, GREEN], [29, ORANGE], [41, BLUE]].forEach(function (s) {
    curve(t2, param(function (x) {
      return [x, s[0] - 12 * Math.sin(2 * Math.PI * (x - 43) / 64)];
    }, 11, 75), s[1], 1.2);
  });

  var t3 = document.getElementById("t3");
  frame(t3);
  function tiltEllipse(cx, cy, a, b, rot) {
    return param(function (u) {
      var x = a * Math.cos(u), y = b * Math.sin(u);
      return [cx + x * Math.cos(rot) - y * Math.sin(rot), cy + x * Math.sin(rot) + y * Math.cos(rot)];
    }, 0, 6.2832);
  }
  curve(t3, tiltEllipse(43, 30, 33, 9, 0.34), ORANGE, 1.2);
  curve(t3, tiltEllipse(43, 30, 33, 9, -0.34), GREEN, 1.2);
  curve(t3, tiltEllipse(41, 29, 11, 24, 0), BLUE, 1.3);

  var t4 = document.getElementById("t4");
  frame(t4);
  var tx = function (p) { return [11 + (p[0] - 500) * 0.395, 30 - (p[1] - 240) * 0.31]; };
  curve(t4, circlePts().map(tx), BLUE, 0.9);
  curve(t4, starPts(300).map(tx), ORANGE, 1.2, 0.9);
})();
```
